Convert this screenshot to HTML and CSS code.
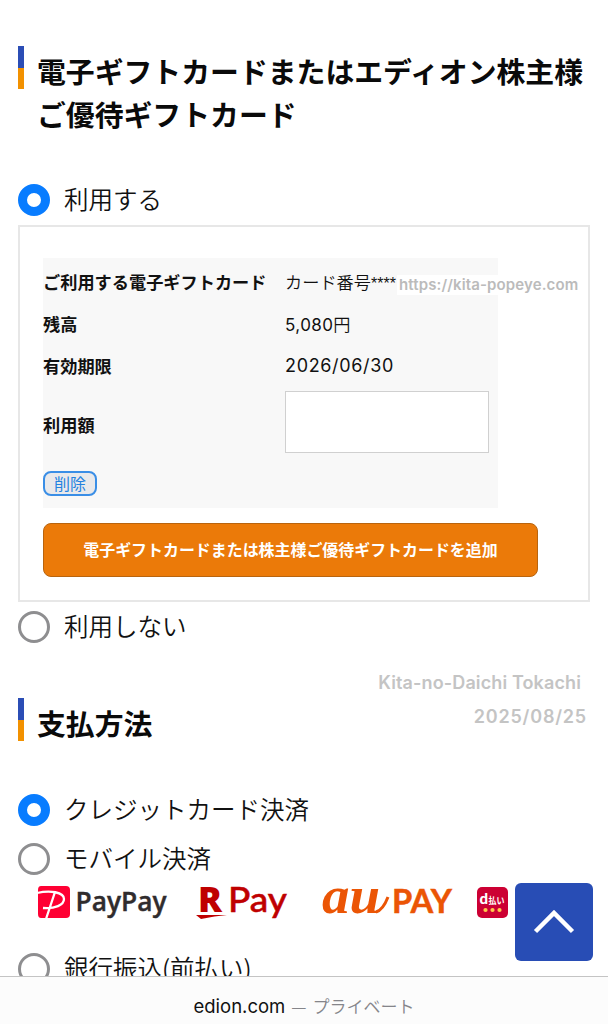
FILE: index.html
```html
<!DOCTYPE html>
<html lang="ja">
<head>
  <meta charset="UTF-8" />
  <meta name="viewport" content="width=device-width, initial-scale=1.0"/>
  <title>お支払い方法</title>
  <link rel="stylesheet" href="styles.css">
</head>
<body>
  <main class="page">
    <section class="gift">
      <h2 class="section-title">電子ギフトカードまたはエディオン株主様<br>ご優待ギフトカード</h2>

      <div class="option option-use">
        <span class="radio checked"></span>
        <span class="option-label">利用する</span>
      </div>

      <div class="card-box">
        <div class="card-table">
          <div class="row">
            <div class="th">ご利用する電子ギフトカード</div>
            <div class="td">カード番号<span class="mask">****</span></div>
            <span class="watermark-url">https://kita-popeye.com</span>
          </div>
          <div class="row">
            <div class="th">残高</div>
            <div class="td"><span class="amount">5,080</span>円</div>
          </div>
          <div class="row">
            <div class="th">有効期限</div>
            <div class="td date">2026/06/30</div>
          </div>
          <div class="row row-input">
            <div class="th">利用額</div>
            <input class="amount-input" type="text">
          </div>
          <div class="row row-delete">
            <button class="delete-button">削除</button>
          </div>
        </div>
        <button class="add-button">電子ギフトカードまたは株主様ご優待ギフトカードを追加</button>
      </div>

      <div class="option option-unused">
        <span class="radio"></span>
        <span class="option-label">利用しない</span>
      </div>
    </section>

    <div class="watermark">
      <div class="watermark-name">Kita-no-Daichi Tokachi</div>
      <div class="watermark-date">2025/08/25</div>
    </div>

    <section class="payment">
      <h2 class="section-title">支払方法</h2>

      <div class="option option-credit">
        <span class="radio checked"></span>
        <span class="option-label">クレジットカード決済</span>
      </div>
      <div class="option option-mobile">
        <span class="radio"></span>
        <span class="option-label">モバイル決済</span>
      </div>

      <div class="brands">
        <svg class="paypay" width="132" height="40" viewBox="0 0 132 40">
          <path d="M4 4H29Q33 4 33 8V32Q33 36 29 36H4Q1 36 1 32V8Q1 4 4 4Z" fill="#ff0033"/>
          <path d="M0 11C13 8 27 10 27 17C27 23 18 27 6 26M18 10L9 37" fill="none" stroke="#fff" stroke-width="2.3"/>
          <text class="paypay-text" x="38.500" y="29" textLength="91" lengthAdjust="spacingAndGlyphs">PayPay</text>
        </svg>
        <svg class="rpay" width="94" height="40" viewBox="0 0 94 40">
          <text class="rpay-mark" x="2" y="30" textLength="24" lengthAdjust="spacingAndGlyphs">R</text>
          <path d="M0 33H31Q19 34 5 37Z" fill="#bf0000"/>
          <text class="rpay-text" x="32" y="30" textLength="59" lengthAdjust="spacingAndGlyphs">Pay</text>
        </svg>
        <svg class="aupay" width="132" height="40" viewBox="0 0 132 40">
          <text class="au-mark" x="0" y="31" textLength="58" lengthAdjust="spacingAndGlyphs">au</text>
          <path d="M54 30Q61 28 66 15" fill="none" stroke="#eb5505" stroke-width="3"/>
          <text class="au-text" x="70" y="31" textLength="60" lengthAdjust="spacingAndGlyphs">PAY</text>
        </svg>
        <svg class="dpay" width="31" height="31" viewBox="0 0 31 31">
          <rect width="31" height="31" rx="5" fill="#cc0033"/>
          <text class="d-mark" x="2.500" y="17">d</text>
          <text class="d-text" x="11.500" y="16.500" textLength="16" lengthAdjust="spacingAndGlyphs">払い</text>
          <circle cx="8.500" cy="23" r="2.1" fill="#ffc84d"/>
          <circle cx="15.500" cy="23" r="2.1" fill="#ffc84d"/>
          <circle cx="22.500" cy="23" r="2.1" fill="#ffc84d"/>
        </svg>
      </div>

      <div class="option option-bank">
        <span class="radio"></span>
        <span class="option-label">銀行振込(前払い)</span>
      </div>
    </section>
  </main>

  <a class="page-top">
    <svg width="78" height="78" viewBox="0 0 78 78">
      <path d="M20.500 48.500L39 30L57.500 48.500" fill="none" stroke="#fff" stroke-width="4.500"/>
    </svg>
  </a>

  <!-- Browser address bar -->
  <footer class="address-bar">
    <span class="domain">edion.com</span>
    <span class="dash">—</span>
    <span class="private">プライベート</span>
  </footer>
</body>
</html>
```
FILE: styles.css
```css
* {
  box-sizing: border-box;
}

body {
  margin: 0;
  height: 1024px;
  overflow: hidden;
  background-color: #fff;
  color: #111;
  font-family: 'Noto Sans CJK JP', sans-serif;
  white-space: nowrap;
}

svg {
  overflow: visible;
}

.page {
  padding: 46px 18px 0;
}

.section-title {
  position: relative;
  margin: 0;
  padding: 3px 0 1px 19px;
  font-size: 28.85px;
  line-height: 43px;
  font-weight: 700;
  color: #0a0a0a;
}

.section-title::before {
  content: "";
  position: absolute;
  left: 0;
  top: 0;
  width: 6px;
  height: 43px;
  background: linear-gradient(#2b4db5 50%, #f29100 50%);
}

.option {
  display: flex;
  align-items: center;
  gap: 14px;
  height: 32px;
}

.option-label {
  padding-bottom: 2px;
  font-size: 24.5px;
  line-height: 30px;
  font-weight: 350;
}

.radio {
  width: 32px;
  height: 32px;
  border: 3px solid #8e8e90;
  border-radius: 50%;
}

.radio.checked {
  border: 9px solid #087cff;
}

.option-use {
  margin-top: 48px;
}

.card-box {
  width: 572px;
  height: 377px;
  margin-top: 9px;
  padding: 31px 23px 0;
  border: 2px solid #e7e7e7;
}

.card-table {
  width: 455px;
  height: 250px;
  padding-top: 2px;
  background-color: #f8f8f8;
}

.row {
  position: relative;
  display: flex;
  align-items: center;
  height: 42px;
  font-size: 17.2px;
}

.th {
  width: 242px;
  font-weight: 700;
}

.td {
  font-weight: 350;
}

.mask {
  font-family: 'Liberation Sans', sans-serif;
  font-size: 16px;
}

.amount, .date {
  font-family: Inter, sans-serif;
  font-weight: 400;
}

.amount {
  font-size: 17px;
  letter-spacing: 0.4px;
}

.date {
  font-size: 18px;
  letter-spacing: 0.65px;
}

.watermark-url {
  position: absolute;
  left: 354px;
  top: 15px;
  padding: 0 2px;
  height: 20px;
  line-height: 20px;
  background-color: #fff;
  color: #bbb;
  font-family: Inter, sans-serif;
  font-size: 15px;
  font-weight: 600;
  letter-spacing: 0.12px;
}

.row-input {
  height: 76px;
}

.amount-input {
  width: 204px;
  height: 62px;
  margin-top: -5px;
  border: 1.5px solid #d0d0d0;
  background-color: #fff;
}

.row-delete {
  height: 44px;
}

.delete-button {
  width: 54px;
  height: 25px;
  margin-top: -2px;
  padding: 0 0 1px;
  border: 2px solid #3a8ee6;
  border-radius: 8px;
  background-color: #e9e9eb;
  color: #2482e0;
  font-family: inherit;
  font-size: 16px;
  line-height: 20px;
}

.add-button {
  width: 495px;
  height: 54px;
  margin-top: 15px;
  padding: 0 0 2px;
  border: 1.5px solid #b8640e;
  border-radius: 8px;
  background-color: #eb7a09;
  color: #fff;
  font-family: inherit;
  font-size: 15.95px;
  font-weight: 700;
}

.option-unused {
  margin-top: 9px;
}

.watermark {
  height: 55px;
  color: #c4c4c4;
  font-family: Inter, sans-serif;
  font-size: 18px;
  font-weight: 600;
  text-align: right;
}

.watermark-name {
  padding: 23px 9px 0 0;
  line-height: 34px;
  letter-spacing: 0.12px;
}

.watermark-date {
  padding-right: 3px;
  line-height: 34px;
  letter-spacing: 0.8px;
}

.option-credit {
  margin-top: 49px;
}

.option-mobile {
  margin-top: 17px;
}

.brands {
  display: flex;
  height: 40px;
  margin: 7px 0 0 19px;
}

.rpay {
  margin-left: 27px;
}

.aupay {
  margin-left: 32px;
}

.dpay {
  margin: 5px 0 0 23px;
}

.paypay-text {
  font: 600 27px 'Open Sans', sans-serif;
  fill: #302c2d;
  stroke: #302c2d;
  stroke-width: 0.4px;
}

.rpay-mark {
  font: 900 35px 'Noto Sans', sans-serif;
  fill: #bf0000;
}

.rpay-text {
  font: 500 34px Lato, sans-serif;
  fill: #bf0000;
  stroke: #bf0000;
  stroke-width: 0.5px;
}

.au-mark {
  font: italic 700 53px 'Liberation Serif', serif;
  fill: #eb5505;
}

.au-text {
  font: 700 32px Lato, sans-serif;
  fill: #eb5505;
  stroke: #eb5505;
  stroke-width: 0.5px;
}

.d-mark {
  font: 900 15px Lato, sans-serif;
  fill: #fff;
}

.d-text {
  font: 700 9px 'Noto Sans CJK JP', sans-serif;
  fill: #fff;
}

.option-bank {
  margin-top: 31px;
}

.page-top {
  position: fixed;
  left: 515px;
  top: 883px;
  width: 78px;
  height: 78px;
  border-radius: 6px;
  background-color: #284db5;
}

.address-bar {
  position: fixed;
  left: 0;
  right: 0;
  bottom: 0;
  display: flex;
  justify-content: center;
  height: 48px;
  padding-top: 13px;
  gap: 6px;
  border-top: 1px solid #c4c4c4;
  background-color: #fcfcfc;
  line-height: 32px;
  font-size: 17px;
  color: #85858a;
}

.domain {
  font-family: Inter, sans-serif;
  font-size: 18.5px;
  color: #111;
}

.private {
  font-weight: 350;
}
```
